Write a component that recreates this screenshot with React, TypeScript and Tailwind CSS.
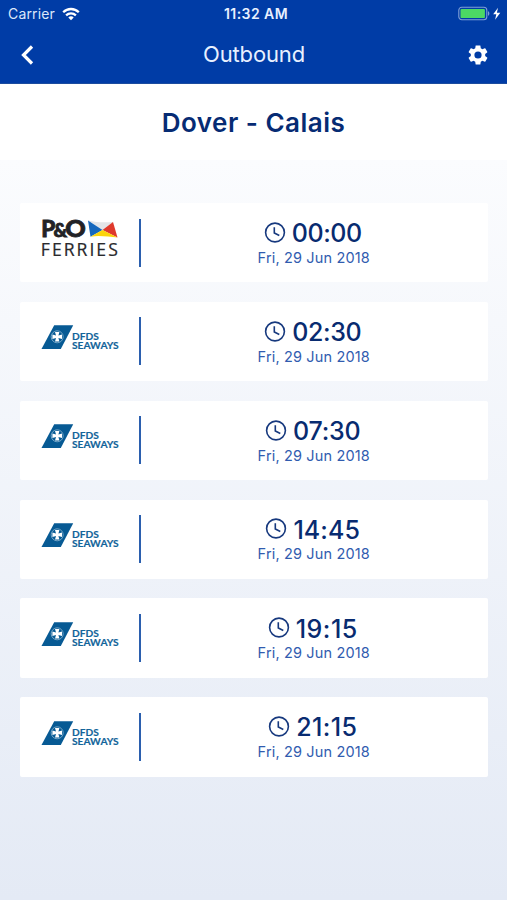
const sailings = [
  { operator: 'po', time: '00:00', spacing: 'tracking-[-0.4px]' },
  { operator: 'dfds', time: '02:30', spacing: 'tracking-[-0.4px]' },
  { operator: 'dfds', time: '07:30', spacing: 'tracking-[-0.2px]' },
  { operator: 'dfds', time: '14:45', spacing: 'tracking-[0.1px]' },
  { operator: 'dfds', time: '19:15', spacing: 'tracking-[0.5px]' },
  { operator: 'dfds', time: '21:15', spacing: 'tracking-[0.4px]' },
];

function WifiIcon() {
  return (
    <svg width="18" height="14" viewBox="0 0 18 14" fill="none" stroke="white" strokeWidth="2.3">
      <path d="M1.2 5.2C5.6.9 12.4.9 16.8 5.2" />
      <path d="M4.1 8.3c2.8-2.7 7-2.7 9.8 0" />
      <path d="M9 13.2 6.3 10.4c1.5-1.4 3.9-1.4 5.4 0z" fill="white" stroke="none" />
    </svg>
  );
}

function BatteryIcon() {
  return (
    <svg width="44" height="16" viewBox="0 0 44 16">
      <rect x="0.8" y="1.2" width="28" height="12.6" rx="3" fill="none" stroke="#7f9fd6" strokeWidth="1.1" />
      <rect x="2.5" y="2.9" width="24.4" height="9.2" rx="1.2" fill="#4cd964" />
      <path d="M30 5.3c1.8.5 1.8 4 0 4.5z" fill="#7f9fd6" />
      <path d="M40 1.8 35.2 8.3h3.1l-1.2 5.4 5.2-7h-3.4z" fill="white" />
    </svg>
  );
}

function GearIcon() {
  return (
    <svg width="24" height="24" viewBox="0 0 24 24" fill="white">
      <path d="M19.14 12.94c.04-.3.06-.61.06-.94 0-.32-.02-.64-.07-.94l2.03-1.58c.18-.14.23-.41.12-.61l-1.92-3.32c-.12-.22-.37-.29-.59-.22l-2.39.96c-.5-.38-1.03-.7-1.62-.94l-.36-2.54c-.04-.24-.24-.41-.48-.41h-3.84c-.24 0-.43.17-.47.41l-.36 2.54c-.59.24-1.13.57-1.62.94l-2.39-.96c-.22-.08-.47 0-.59.22L2.74 8.87c-.12.21-.08.47.12.61l2.03 1.58c-.05.3-.09.63-.09.94s.02.64.07.94l-2.03 1.58c-.18.14-.23.41-.12.61l1.92 3.32c.12.22.37.29.59.22l2.39-.96c.5.38 1.03.7 1.62.94l.36 2.54c.05.24.24.41.48.41h3.84c.24 0 .44-.17.47-.41l.36-2.54c.59-.24 1.13-.56 1.62-.94l2.39.96c.22.08.47 0 .59-.22l1.92-3.32c.12-.22.07-.47-.12-.61zM12 15.6A3.6 3.6 0 1 1 12 8.4a3.6 3.6 0 0 1 0 7.2z" />
    </svg>
  );
}

function ClockIcon() {
  return (
    <svg width="22" height="22" viewBox="0 0 22 22" fill="none" stroke="#17397e" strokeWidth="1.6" className="overflow-visible">
      <circle cx="11" cy="9.5" r="9.4" />
      <path d="M10.3 4.3v5.8l5 2.3" />
    </svg>
  );
}

function PoLogo() {
  return (
    <svg width="80" height="40" viewBox="0 1 80 40" className="overflow-visible">
      <g fontFamily="Lato, sans-serif" fontWeight="900" fill="#222226" stroke="#222226" strokeWidth="0.8">
        <text x="0.2" y="19" fontSize="23" textLength="14" lengthAdjust="spacingAndGlyphs">P</text>
        <text x="12.4" y="19" fontSize="18" textLength="13.6" lengthAdjust="spacingAndGlyphs">&amp;</text>
        <text x="24.2" y="19" fontSize="23" textLength="20.5" lengthAdjust="spacingAndGlyphs">O</text>
      </g>
      <path d="M47 2.5c8 2 17 2 25 1.5L61.5 12z" fill="#e3e5e8" />
      <path d="M47 2.5 61.5 12 49.5 18.8z" fill="#1668bd" />
      <path d="M72 4 76.5 19.5 61.5 12z" fill="#df3a2c" />
      <path d="M49.5 18.8C58 17 68 19 76.5 19.5L61.5 12z" fill="#fbd40b" />
      <text x="-0.2" y="38" fontFamily="'Open Sans', sans-serif" fontSize="17.6" fill="#29292c" stroke="#29292c" strokeWidth="0.2" textLength="77" lengthAdjust="spacing">FERRIES</text>
    </svg>
  );
}

function DfdsLogo() {
  return (
    <svg width="80" height="40" viewBox="0 0 80 40">
      <path d="M13.2 8.2h19L19.8 32H.5z" fill="#075a94" />
      <circle cx="16.2" cy="19.8" r="6" fill="none" stroke="#8db6d2" strokeWidth="0.8" />
      <path d="M14 15h4.4l-1 3.6 3.6-1v4.4l-3.6-1 1 3.6H14l1-3.6-3.6 1v-4.4l3.6 1z" fill="white" />
      <g fontFamily="Lato, sans-serif" fontWeight="700" fontSize="9.8" fill="#12649a" stroke="#12649a" strokeWidth="0.15">
        <text x="31" y="22.7" textLength="26.8" lengthAdjust="spacingAndGlyphs">DFDS</text>
        <text x="31" y="31.9" textLength="46.7" lengthAdjust="spacingAndGlyphs">SEAWAYS</text>
      </g>
    </svg>
  );
}

export default function App() {
  return (
    <div className="flex h-[900px] w-[507px] flex-col overflow-hidden bg-white font-[Inter,sans-serif]">
      <header className="h-[84px] border-b border-[#1c4c9e] bg-[#003ca6] text-white">
        <div className="grid h-[27px] grid-cols-3 items-center pl-2 pr-[5px]">
          <div className="flex items-center gap-[7px] text-[14px] tracking-[0.15px] text-[#dce7fa]">
            <span>Carrier</span>
            <WifiIcon />
          </div>
          <div className="pl-[2px] text-center text-[14px] font-semibold tracking-[0.45px] text-[#e8f0ff]">11:32 AM</div>
          <div className="flex justify-end"><BatteryIcon /></div>
        </div>
        <div className="grid h-[55px] grid-cols-3 items-center pl-[18px] pr-[17px]">
          <svg width="16" height="22" viewBox="0 0 16 22" fill="none" stroke="white" strokeWidth="3.2">
            <path d="m14 2.5-8.5 8.5 8.5 8.5" />
          </svg>
          <div className="text-center text-[22px] tracking-[-0.15px] text-[#e8f0ff]">Outbound</div>
          <div className="flex justify-end"><GearIcon /></div>
        </div>
      </header>
      <h1 className="flex h-[76px] items-center justify-center text-[26px] font-semibold tracking-[0.5px] text-[#062b73]">
        Dover - Calais
      </h1>
      <main className="flex grow flex-col gap-[19.6px] bg-linear-to-b from-[#fbfcfe] to-[#e4eaf5] pl-5 pr-[19px] pt-[42.9px]">
        {sailings.map((sailing) => (
          <article key={sailing.time} className="flex h-[79.3px] shrink-0 items-center rounded-[2px] bg-white">
            <div className="flex h-12 w-[119px] items-center pl-[21px]">
              <div className="-mt-2">{sailing.operator === 'po' ? <PoLogo /> : <DfdsLogo />}</div>
            </div>
            <div className="h-12 w-[1.5px] bg-[#2b5fae]" />
            <div className="flex flex-1 flex-col items-center pr-[1px] pt-[2.4px]">
              <div className="flex h-7 items-center gap-[6px] pr-[2px] text-[25px] font-medium text-[#082b70]">
                <ClockIcon />
                <span className={sailing.spacing}>{sailing.time}</span>
              </div>
              <div className="h-5 text-[14.5px] leading-5 tracking-[0.15px] text-[#315caf]">Fri, 29 Jun 2018</div>
            </div>
          </article>
        ))}
      </main>
    </div>
  );
}
